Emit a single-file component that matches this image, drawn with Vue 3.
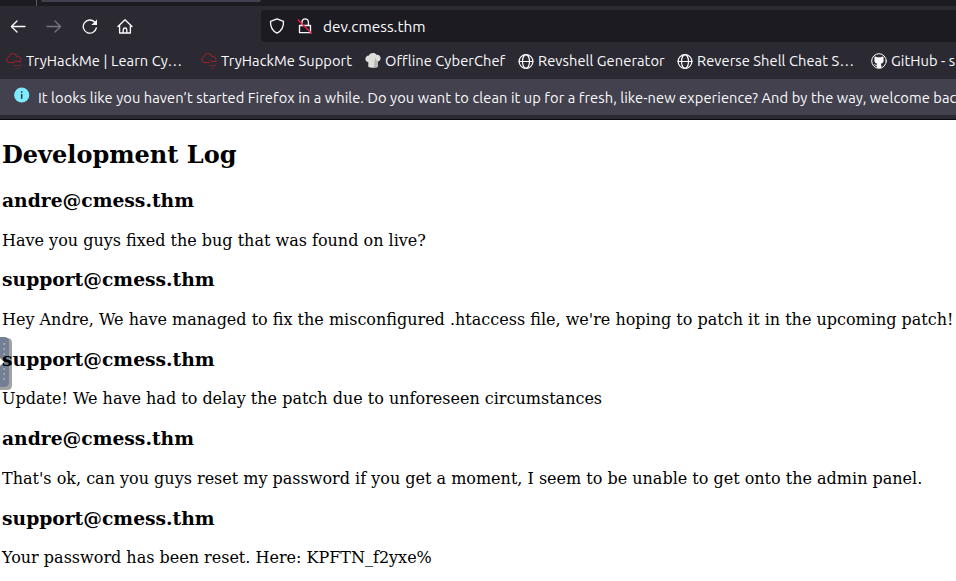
<script setup>
const bookmarks = [
  { label: 'TryHackMe | Learn Cy…', icon: 'cloud' },
  { label: 'TryHackMe Support', icon: 'cloud' },
  { label: 'Offline CyberChef', icon: 'chef' },
  { label: 'Revshell Generator', icon: 'globe' },
  { label: 'Reverse Shell Cheat S…', icon: 'globe' },
  { label: 'GitHub - s', icon: 'github' },
]
const entries = [
  { from: 'andre@cmess.thm', text: 'Have you guys fixed the bug that was found on live?' },
  { from: 'support@cmess.thm', text: "Hey Andre, We have managed to fix the misconfigured .htaccess file, we're hoping to patch it in the upcoming patch!" },
  { from: 'support@cmess.thm', text: 'Update! We have had to delay the patch due to unforeseen circumstances' },
  { from: 'andre@cmess.thm', text: "That's ok, can you guys reset my password if you get a moment, I seem to be unable to get onto the admin panel." },
  { from: 'support@cmess.thm', text: 'Your password has been reset. Here: KPFTN_f2yxe%' },
]
</script>

<template>
  <div class="window">
    <div class="tabs"><i class="divider"></i><i class="tab"></i></div>
    <div class="nav">
      <div class="buttons">
        <svg viewBox="0 0 16 16"><path d="M15 8.500H1.500M7 3 1.400 8.500 7 14" /></svg>
        <svg class="dim" viewBox="0 0 16 16"><path d="M1 8.500h13.500M9 3l5.600 5.500L9 14" /></svg>
        <svg viewBox="0 0 16 16"><path d="M14.300 10A6.600 6.600 0 1 1 12.600 4" /><path class="solid" d="M15 1.500v5.600H9.400z" /></svg>
        <svg class="home" viewBox="0 0 16 16"><path d="M1 8.500 8 1.700 15 8.500M2.600 7.500V15h10.800V7.500M6.200 15v-3.200a1.800 1.800 0 0 1 3.600 0V15" /></svg>
      </div>
      <div class="url">
        <svg viewBox="0 0 16 16"><path d="M8 .9 14.500 3.300c.3 5.500-1.700 9.500-6.500 11.900C3.200 12.800 1.200 8.800 1.500 3.300z" /></svg>
        <svg class="lock" viewBox="0 0 16 16"><path d="M2.500 7.500h11v7.200h-11zM5 7V4a3.200 3.200 0 0 1 6.400 0v3.300" /><path class="slash" d="M1.200 2 14.500 15.300" /></svg>
        <span class="host">dev.cmess.thm</span>
      </div>
    </div>
    <div class="bookmarks">
      <div v-for="b in bookmarks" :key="b.label" class="bookmark">
        <svg v-if="b.icon === 'cloud'" class="cloud" viewBox="0 0 16 16"><path d="M8 9.500H3.200A2.700 2.700 0 0 1 2.700 4.200C3.200-.3 9.500-.7 10.700 3.500c2.600-.5 4.200 1 4.300 3.500M9 8h2M12 8.500h3" /><path class="faint" d="M8.500 12.500h3M12.500 12.500h2.500M11 15h2" /></svg>
        <svg v-else-if="b.icon === 'chef'" class="chef" viewBox="0 0 16 16"><path fill="#dededb" d="M3.300 13.800V9C-1 8.300-.4 2.700 4 2.500c1-3 6.300-3.200 7.500-.7 5.100-.2 5.300 6.100 1.500 6.700v5.300c-2 1.300-7.500 1.500-9.700 0z" /><path fill="#b5b5b2" d="M10 4 9 14.500c1.800 0 3-.2 4-.8V8.500c-1.500-.7-2.500-2.500-3-4.500z" /></svg>
        <svg v-else-if="b.icon === 'globe'" class="globe" viewBox="0 0 16 16"><circle cx="8" cy="8.500" r="6.900" /><ellipse cx="8" cy="8.500" rx="3.500" ry="6.900" /><path d="M1 8.500h14" /></svg>
        <svg v-else class="github" viewBox="0 0 16 16"><circle cx="8" cy="8" r="7.300" /><path d="M5.800 15v-2.300C3.500 13 3.700 11.500 2.500 11c1.300-.3 1.500 1 3.400.8l.4-1C3.900 10.400 3 8.700 3.500 6c-.2-1-.1-2 .3-2.700l2.300 1h3.800l2.300-1c.4.700.5 1.700.3 2.700.5 2.700-.4 4.400-2.800 4.800l.6 1.400V15z" /></svg>
        <span>{{ b.label }}</span>
      </div>
    </div>
    <div class="notice">
      <svg viewBox="0 0 16 16"><circle cx="7.700" cy="8" r="7.600" fill="#80ebff" stroke="none" /><path class="info" d="M7.700 7v4.800M7.700 4.200v1.500" /></svg>
      <span>It looks like you haven’t started Firefox in a while. Do you want to clean it up for a fresh, like-new experience? And by the way, welcome bac</span>
    </div>
    <div class="handle">
      <svg viewBox="0 0 12 54"><path fill="#a2a2a2" d="M0 1h7q5 0 5 5v42q0 5-5 5H0z" /><path fill="#738093" d="M0 0h4q5 0 5 5v40q0 5-5 5H0z" /><path stroke="#a5b0bd" stroke-width="1.500" stroke-dasharray="2 3" stroke-linecap="butt" d="M4.200 6v40" /></svg>
    </div>
    <main>
      <h2>Development Log</h2>
      <template v-for="(e, i) in entries" :key="i">
        <h3>{{ e.from }}</h3>
        <p>{{ e.text }}</p>
      </template>
    </main>
    <div class="handle">
      <svg viewBox="0 0 12 54"><path fill="#fff" d="M0 21 4 25 0 29z" /></svg>
    </div>
  </div>
</template>

<style>
body { margin: 0; background: #fff; overflow: hidden; }
</style>

<style scoped>
.window { position: relative; width: 956px; height: 581px; overflow: hidden; background: #fff; color: #000; font-family: "DejaVu Serif", serif; }
.tabs { height: 6px; background: #1c1b22; display: flex; align-items: flex-start; }
.divider { width: 1px; height: 6px; margin-left: 36px; background: #5b5a63; }
.tab { width: 220px; height: 2px; margin-left: 4px; background: #42414d; border-radius: 0 0 4px 4px; }
.nav { height: 36px; padding-top: 4px; box-sizing: border-box; background: #2b2a33; display: flex; }
.buttons { width: 261px; display: flex; gap: 20px; align-items: center; padding-left: 10px; box-sizing: border-box; }
svg { display: block; width: 16px; height: 16px; flex: none; fill: none; stroke: #fbfbfe; stroke-width: 1.300; stroke-linejoin: round; stroke-linecap: round; }
.dim { stroke: #77767e; }
.home { margin-left: -1px; }
.solid { fill: #fbfbfe; stroke: none; }
.url { flex: 1; height: 32px; background: #1c1b22; border-radius: 4px 0 0 4px; display: flex; align-items: center; padding-left: 8px; }
.lock { margin-left: 12px; }
.slash { stroke: #ff1842; }
.host, .bookmarks, .notice { font-family: Ubuntu, "Noto Sans", sans-serif; font-size: 14.667px; line-height: 20px; color: #fbfbfe; white-space: nowrap; }
.host { margin-left: 10px; padding-top: 1px; font-size: 15.400px; }
.bookmarks { height: 37px; background: #2b2a33; display: grid; grid-template-columns: 195px 164px 153px 159px 194px 91px; padding-left: 6px; box-sizing: border-box; letter-spacing: .07px; }
.bookmark { display: flex; align-items: center; gap: 4px; min-width: 0; }
.cloud { stroke: #ad1e28; stroke-width: 1; }
.faint { stroke: #762631; }
.chef { stroke: none; }
.globe { stroke-width: 1.200; }
.github { stroke-width: 1; }
.github path { fill: #fbfbfe; stroke: none; }
.info { stroke: #33323e; stroke-width: 1.500; stroke-linecap: butt; }
.notice { height: 40px; box-sizing: border-box; background: #42414d; border-bottom: 4px solid #2b2a33; display: flex; align-items: center; padding-left: 14px; gap: 8px; overflow: hidden; letter-spacing: .083px; }
.notice svg { margin-top: -5px; }
.notice span { padding-top: 1px; }
main { position: relative; padding-left: 2px; border-top: 1px solid #0c0c0d; white-space: nowrap; }
h2 { font-size: 24px; line-height: 28px; margin: 21px 0 19.800px; }
h3 { font-size: 18.720px; line-height: 23px; margin: 18.720px 0; }
p { font-size: 16px; line-height: 19px; margin: 0; }
.handle { position: absolute; left: 0; top: 337px; }
.handle svg { width: 12px; height: 54px; stroke: none; }
</style>
